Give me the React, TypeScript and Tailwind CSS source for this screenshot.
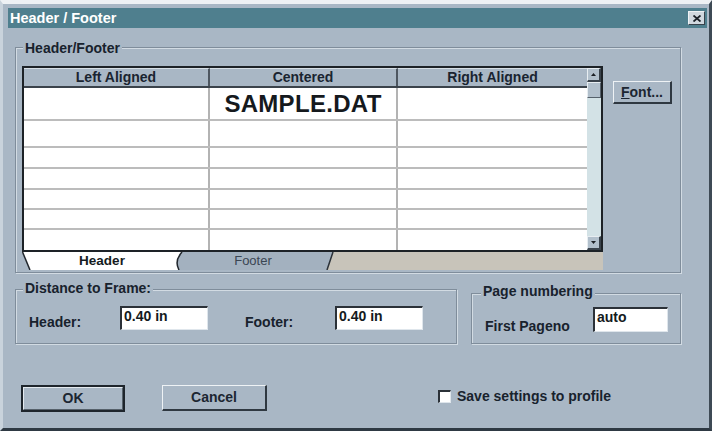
import React from "react";

const rowHeights = [33, 27, 21, 21, 20, 20, 20];

const GroupBox = ({
  label,
  labelClass,
  className,
  children,
}: {
  label: string;
  labelClass: string;
  className: string;
  children?: React.ReactNode;
}) => (
  <div
    className={`relative border border-[#7f8d9b] shadow-[inset_1px_1px_0_#d2dbe3,1px_1px_0_#d2dbe3] ${className}`}
  >
    <span
      className={`absolute px-[2px] bg-[#a9b7c5] text-[14px] leading-[16px] font-bold text-[#18222d] ${labelClass}`}
    >
      {label}
    </span>
    {children}
  </div>
);

const Sunken = ({ value, className }: { value: string; className: string }) => (
  <div
    className={`bg-white border-t-2 border-l-2 border-t-[#2b3138] border-l-[#2b3138] border-b border-r border-b-[#dfe6ec] border-r-[#dfe6ec] pl-[2px] pt-[1px] text-[14px] leading-[15px] font-bold text-[#141a20] ${className}`}
  >
    {value}
  </div>
);

const Arrow = ({ up }: { up?: boolean }) => (
  <svg width="5" height="3" viewBox="0 0 5 3">
    <path d={up ? "M0 3 L2.5 0 L5 3 Z" : "M0 0 L2.5 3 L5 0 Z"} fill="#1b1f24" />
  </svg>
);

export default function App() {
  return (
    <div className="w-[712px] h-[431px] overflow-hidden bg-[#a9b7c5] border-t-[4px] border-t-[#eef1f4] border-l-[3px] border-l-[#c9d3dc] border-r-[3px] border-r-[#3e4a55] border-b-[3px] border-b-[#2e3943] flex flex-col font-['Liberation_Sans',Arial,sans-serif]">
      {/* title bar */}
      <div className="ml-[5px] mt-[4px] w-[699px] h-[20px] bg-[#4f7f8e] flex items-center justify-between pl-[2px] pr-[2px]">
        <span className="text-white font-bold text-[14.5px] leading-none">Header / Footer</span>
        <div className="w-[17px] h-[14px] bg-[#d0d8df] border-t border-l border-[#eef2f5] border-b border-r border-b-[#39434c] border-r-[#39434c] flex items-center justify-center">
          <svg width="8" height="7" viewBox="0 0 8 7">
            <path d="M0.5 0.5 L7.5 6.5 M7.5 0.5 L0.5 6.5" stroke="#1a2027" strokeWidth="1.8" />
          </svg>
        </div>
      </div>

      {/* Header/Footer group */}
      <GroupBox
        label="Header/Footer"
        labelClass="-top-[8px] left-[7px]"
        className="ml-[12px] mt-[19px] w-[666px] h-[226px]"
      >
        <div className="flex items-start pl-[6px] pt-[18px]">
          <div className="flex flex-col w-[581px]">
            <div className="w-[581px] border-2 border-[#1d2227] flex bg-white">
              <div className="w-[563px] flex flex-col">
                <div className="h-[20px] flex bg-[#a9b7c5] border-b-2 border-b-[#3b434b] text-[14px] font-bold text-[#1a2430]">
                  <div className="w-[186px] border-r-2 border-r-[#4d5660] border-t border-t-[#d6dee5] flex items-center justify-center">Left Aligned</div>
                  <div className="w-[188px] border-r-2 border-r-[#4d5660] border-t border-t-[#d6dee5] flex items-center justify-center">Centered</div>
                  <div className="w-[189px] border-t border-t-[#d6dee5] flex items-center justify-center">Right Aligned</div>
                </div>
                {rowHeights.map((h, i) => (
                  <div
                    key={i}
                    style={{ height: h }}
                    className={`flex ${i < rowHeights.length - 1 ? "border-b-2 border-b-[#bcbcbc]" : ""}`}
                  >
                    <div className="w-[186px] border-r-2 border-r-[#b3b3b3]" />
                    <div className="w-[188px] border-r-2 border-r-[#b3b3b3] flex items-center justify-center text-[24px] font-bold text-[#15191d] tracking-[0.3px]">
                      {i === 0 ? "SAMPLE.DAT" : ""}
                    </div>
                    <div className="w-[189px]" />
                  </div>
                ))}
              </div>
              <div className="w-[14px] flex flex-col bg-[#d3e2e6]">
                <div className="h-[14px] bg-[#b2c0cc] border-t border-l border-[#e7edf1] border-b-2 border-r-2 border-b-[#3a434c] border-r-[#3a434c] flex items-center justify-center">
                  <Arrow up />
                </div>
                <div className="h-[16px] bg-[#b2c0cc] border-t border-l border-[#e7edf1] border-b border-r border-b-[#56616b] border-r-[#56616b]" />
                <div className="flex-1" />
                <div className="h-[14px] bg-[#b2c0cc] border-t border-l border-[#e7edf1] border-b-2 border-r-2 border-b-[#3a434c] border-r-[#3a434c] flex items-center justify-center">
                  <Arrow />
                </div>
              </div>
            </div>
            {/* tabs */}
            <div className="relative h-[18px] w-[581px] flex items-center">
              <svg className="absolute inset-0" width="581" height="18" viewBox="0 0 581 18">
                <path d="M311 0 H581 V18 H305 Z" fill="#c8c4ba" />
                <path d="M160 0 H311 L305 18 H157 Q152 9 160 0 Z" fill="#a3b1bf" />
                <path d="M0 0 H160 Q152 9 157 18 H8 Z" fill="#ffffff" />
                <path d="M0.5 0 L8 18" stroke="#20262c" strokeWidth="1.5" fill="none" />
                <path d="M160 0 Q152 9 157 18" stroke="#20262c" strokeWidth="1.5" fill="none" />
                <path d="M305 18 L311 0" stroke="#2b3239" strokeWidth="1.5" fill="none" />
              </svg>
              <span className="relative w-[160px] text-center text-[13.5px] font-bold text-[#151b21]">Header</span>
              <span className="relative w-[142px] text-center text-[13px] text-[#3a4653]">Footer</span>
            </div>
          </div>
          <button className="ml-[10px] mt-[15px] w-[59px] h-[23px] bg-[#a9b7c5] border-t border-l border-[#eef2f5] border-b-2 border-r-2 border-b-[#2f3841] border-r-[#2f3841] text-[14px] font-bold text-[#1c2631] flex items-center justify-center">
            <span><span className="underline">F</span>ont...</span>
          </button>
        </div>
      </GroupBox>

      {/* second row */}
      <div className="flex items-start ml-[12px] mt-[16px]">
        <GroupBox
          label="Distance to Frame:"
          labelClass="-top-[10px] left-[7px]"
          className="w-[442px] h-[55px]"
        >
          <div className="flex items-start pl-[13px] pt-[16px] text-[14px] font-bold text-[#18222d]">
            <span className="w-[91px] mt-[8px] leading-[16px]">Header:</span>
            <Sunken value="0.40 in" className="w-[88px] h-[24px]" />
            <span className="ml-[37px] w-[90px] mt-[8px] leading-[16px]">Footer:</span>
            <Sunken value="0.40 in" className="w-[88px] h-[24px]" />
          </div>
        </GroupBox>
        <GroupBox
          label="Page numbering"
          labelClass="-top-[11px] left-[9px]"
          className="ml-[14px] mt-[4px] w-[210px] h-[51px]"
        >
          <div className="flex items-start pl-[13px] pt-[13px] text-[14px] font-bold text-[#18222d]">
            <span className="w-[108px] mt-[11px] leading-[16px]">First Pageno</span>
            <Sunken value="auto" className="w-[75px] h-[25px]" />
          </div>
        </GroupBox>
      </div>

      {/* buttons */}
      <div className="flex items-start mt-[41px] ml-[18px]">
        <button className="w-[104px] h-[27px] border-2 border-[#1e252c] bg-[#a9b7c5] flex">
          <span className="flex-1 border-t border-l border-[#e4eaef] border-b border-r border-b-[#56616b] border-r-[#56616b] flex items-center justify-center text-[14px] font-bold text-[#1c2631]">
            OK
          </span>
        </button>
        <button className="ml-[37px] w-[105px] h-[26px] bg-[#a9b7c5] border-t border-l border-[#eef2f5] border-b-2 border-r-2 border-b-[#2f3841] border-r-[#2f3841] flex items-center justify-center text-[14px] font-bold text-[#1c2631]">
          Cancel
        </button>
        <div className="ml-[171px] mt-[3px] flex items-center">
          <div className="w-[13px] h-[13px] bg-white border-t-2 border-l-2 border-[#2b3138] border-b border-r border-b-[#dfe6ec] border-r-[#dfe6ec]" />
          <span className="ml-[6px] text-[14px] font-bold text-[#18222d] leading-[16px]">Save settings to profile</span>
        </div>
      </div>
    </div>
  );
}
